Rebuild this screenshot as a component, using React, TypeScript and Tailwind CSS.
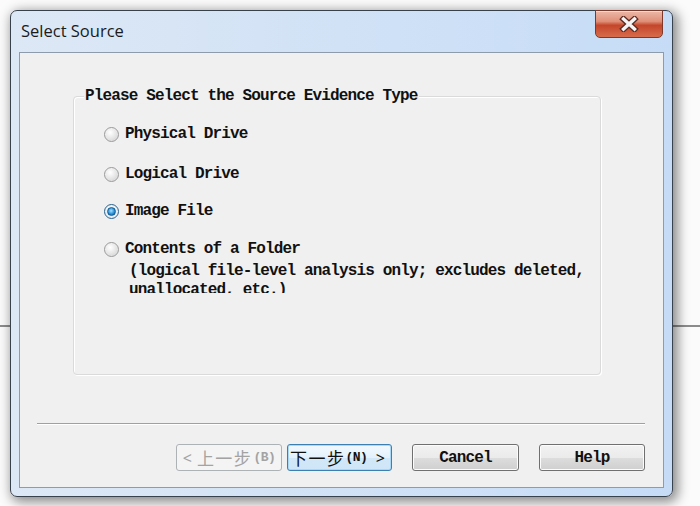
import React from "react";

const mono = { fontFamily: '"Liberation Mono", "DejaVu Sans Mono", monospace' };

function Radio({ checked }: { checked?: boolean }) {
  if (checked) {
    return (
      <span className="relative flex h-[15px] w-[15px] shrink-0 items-center justify-center rounded-full border border-[#2c628b] bg-[radial-gradient(circle_at_50%_40%,#ffffff,#d6e6f2)]">
        <span className="h-[9px] w-[9px] rounded-full border border-[#1c5a8a] bg-[radial-gradient(circle_at_45%_40%,#a8e0ff,#1a8ad4_60%,#0e5f9e)]" />
      </span>
    );
  }
  return (
    <span className="h-[15px] w-[15px] shrink-0 rounded-full border border-[#9a9a9a] bg-[radial-gradient(circle_at_40%_35%,#ffffff,#e4e4e4_55%,#c9c9c9)] shadow-[inset_0_0_1px_#ffffff]" />
  );
}

function Option({ label, checked, className }: { label: string; checked?: boolean; className?: string }) {
  return (
    <div className={"flex h-[20px] items-center gap-[6px] pl-[30px] " + (className ?? "")}>
      <Radio checked={checked} />
      <span className="text-[16px] font-bold leading-[20px] tracking-[-0.85px] text-[#111]" style={mono}>
        {label}
      </span>
    </div>
  );
}

export default function App() {
  return (
    <div className="relative h-[506px] w-[700px] overflow-hidden bg-[#fbfbfb]">
      {/* background page line behind the window */}
      <div className="absolute left-0 top-[325px] h-[2px] w-[700px] bg-[#8c8c8c]" />

      <div className="relative ml-[10px] mt-[10px] flex h-[487px] w-[663px] flex-col rounded-[7px] border border-[#38424d] bg-gradient-to-r from-[#dde8f5] via-[#d1e2f6] to-[#c6dcf6] shadow-[3px_3px_12px_2px_rgba(0,0,0,0.45)]">
        {/* title bar */}
        <div className="relative flex h-[41px] shrink-0 items-center pl-[10px]">
          <span
            className="text-[16.5px] leading-none text-[#1b1b1b]"
            style={{ fontFamily: '"Open Sans", "Noto Sans", sans-serif' }}
          >
            Select Source
          </span>
          <div className="absolute right-[9px] top-[-1px] flex h-[28px] w-[68px] items-center justify-center rounded-b-[5px] border border-[#7d3a2c] bg-[linear-gradient(to_bottom,#ecb8a8_0%,#df8f78_40%,#c5462a_55%,#d66c4c_100%)] shadow-[inset_0_1px_0_rgba(255,255,255,0.5)]">
            <svg width="20" height="16" viewBox="0 0 20 16">
              <path d="M4.5 3 L15.5 13 M15.5 3 L4.5 13" stroke="#5a2a22" strokeWidth="6" strokeLinecap="square" fill="none" />
              <path d="M4.5 3 L15.5 13 M15.5 3 L4.5 13" stroke="#f4f4f4" strokeWidth="3.4" strokeLinecap="square" fill="none" />
            </svg>
          </div>
        </div>

        {/* client area */}
        <div className="mx-[8px] mb-[8px] flex flex-1 flex-col border border-[#8d9bab] bg-[#f0f0f0]">
          {/* group box */}
          <div className="relative ml-[53px] mt-[43px] h-[279px] w-[528px] rounded-[4px] border border-[#dadada] shadow-[inset_1px_1px_0_#ffffff,1px_1px_0_#ffffff]">
            <span
              className="absolute left-[10px] top-[-11px] bg-[#f0f0f0] px-[1px] text-[16px] font-bold leading-[20px] tracking-[-0.85px] text-[#111]"
              style={mono}
            >
              Please Select the Source Evidence Type
            </span>
            <div className="flex flex-col pt-[27px]">
              <Option label="Physical Drive" />
              <Option label="Logical Drive" className="mt-[20px]" />
              <Option label="Image File" checked className="mt-[17px]" />
              <Option label="Contents of a Folder" className="mt-[18px]" />
              <div
                className="ml-[55px] mt-[3px] h-[31px] overflow-hidden text-[16px] font-bold leading-[19px] tracking-[-0.85px] text-[#111]"
                style={mono}
              >
                <div>(logical file-level analysis only; excludes deleted,</div>
                <div>unallocated, etc.)</div>
              </div>
            </div>
          </div>

          {/* separator */}
          <div className="ml-[17px] mt-[48px] h-[2px] w-[608px] border-t border-[#a0a0a0] border-b border-b-white" />

          {/* buttons */}
          <div className="ml-[156px] mt-[19px] flex h-[27px]">
            <button className="flex h-[27px] w-[106px] items-center justify-center gap-[1px] rounded-[3px] border border-[#adb2b5] bg-[#f4f4f4] text-[#a3a3a3]">
              <span className="mr-[4px] text-[16px]" style={{ fontFamily: '"Noto Sans", sans-serif' }}>&lt;</span>
              <span className="text-[17px] leading-none tracking-[1.5px]" style={{ fontFamily: '"Noto Sans CJK SC", sans-serif' }}>上一步</span>
              <span className="text-[13px] font-bold tracking-[-0.5px]" style={mono}>(B)</span>
            </button>
            <button className="ml-[5px] flex h-[27px] w-[105px] items-center justify-between rounded-[3px] border border-[#3c7fb1] bg-[linear-gradient(to_bottom,#f2f9fe_0%,#e3f1fc_50%,#d2e8f8_51%,#cfe6f8_100%)] pl-[2px] pr-[6px] text-[#111] shadow-[inset_0_0_0_1px_#a8d8f5]">
              <span className="flex items-center">
                <span className="text-[17px] leading-none tracking-[1.5px]" style={{ fontFamily: '"Noto Sans CJK SC", sans-serif' }}>下一步</span>
                <span className="text-[13px] font-bold tracking-[-0.5px]" style={mono}>(N)</span>
              </span>
              <span className="text-[16px]" style={{ fontFamily: '"Noto Sans", sans-serif' }}>&gt;</span>
            </button>
            <button
              className="ml-[20px] flex h-[27px] w-[107px] items-center justify-center rounded-[3px] border border-[#707070] bg-[linear-gradient(to_bottom,#f2f2f2_0%,#ebebeb_50%,#dddddd_51%,#cfcfcf_100%)] text-[16px] font-bold tracking-[-0.85px] text-[#111] shadow-[inset_0_0_0_1px_#fcfcfc]"
              style={mono}
            >
              Cancel
            </button>
            <button
              className="ml-[20px] flex h-[27px] w-[106px] items-center justify-center rounded-[3px] border border-[#707070] bg-[linear-gradient(to_bottom,#f2f2f2_0%,#ebebeb_50%,#dddddd_51%,#cfcfcf_100%)] text-[16px] font-bold tracking-[-0.85px] text-[#111] shadow-[inset_0_0_0_1px_#fcfcfc]"
              style={mono}
            >
              Help
            </button>
          </div>
        </div>
      </div>
    </div>
  );
}
